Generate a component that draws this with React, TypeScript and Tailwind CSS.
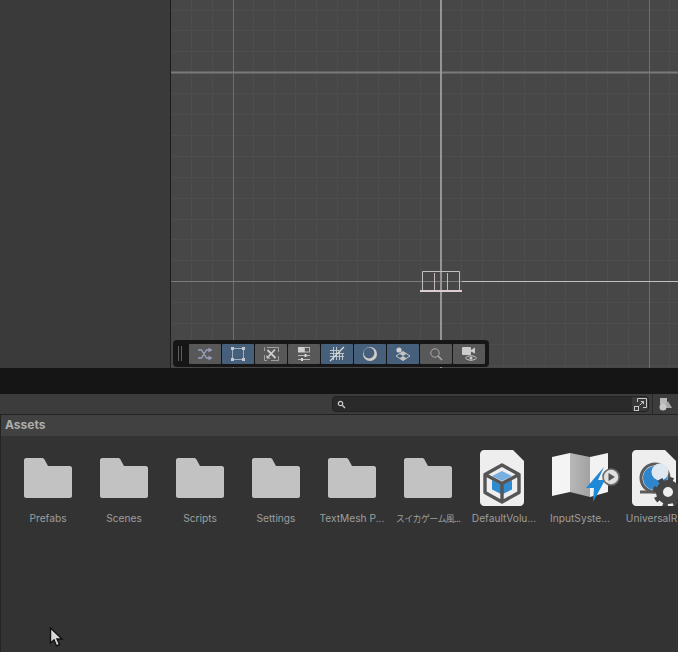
import type { ReactNode } from "react";

const minorX = Array.from({ length: 25 }, (_, i) => Math.floor(170.6 + i * 20.8) + 0.5);
const minorY = Array.from({ length: 18 }, (_, i) => Math.floor(10 + i * 20.9) + 0.5);

const assets = [
  { name: "Prefabs", kind: "folder", text: "text-[10.2px]" },
  { name: "Scenes", kind: "folder", text: "text-[10.2px]" },
  { name: "Scripts", kind: "folder", text: "text-[10.2px]" },
  { name: "Settings", kind: "folder", text: "text-[10.2px]" },
  { name: "TextMesh P...", kind: "folder", text: "text-[10.2px]" },
  { name: "スイカゲーム風...", kind: "folder", text: "text-[9px] tracking-[-0.6px]" },
  { name: "DefaultVolu...", kind: "volume", text: "text-[10.2px]" },
  { name: "InputSyste...", kind: "input", text: "text-[10.2px]" },
  { name: "UniversalR...", kind: "urp", text: "text-[10.2px]" },
];

function SceneGrid() {
  return (
    <svg className="absolute inset-0" width="507" height="368" viewBox="171 0 507 368">
      {minorX.map((x) => (
        <line key={x} x1={x} x2={x} y1="0" y2="368" stroke="#4d4d4d" />
      ))}
      {minorY.map((y) => (
        <line key={y} x1="171" x2="678" y1={y} y2={y} stroke="#4d4d4d" />
      ))}
      <line x1="233.5" x2="233.5" y1="0" y2="368" stroke="#6e6e6e" />
      <line x1="649.5" x2="649.5" y1="0" y2="368" stroke="#6e6e6e" />
      <line x1="171" x2="678" y1="72.5" y2="72.5" stroke="#7a7a7a" strokeWidth="2" />
      <line x1="171" x2="678" y1="281.5" y2="281.5" stroke="#7a7a7a" />
      <line x1="441" x2="441" y1="0" y2="368" stroke="#959595" strokeWidth="2" />
      <path d="M422.5 291V271.5H459.5V291" fill="none" stroke="#c0c0c0" />
      <path d="M434.5 273V290M447.5 273V290" stroke="#c8b4ba" />
      <rect x="420" y="290" width="42" height="2" fill="#dccdd1" />
      <line x1="462" x2="678" y1="281.5" y2="281.5" stroke="#c0c0c0" />
    </svg>
  );
}

function ToolButton({ active, children }: { active?: boolean; children: ReactNode }) {
  return (
    <div
      className={`flex h-5 w-8 items-center justify-center rounded-[1px] ${active ? "bg-[#46607c]" : "bg-[#585858]"}`}
    >
      {children}
    </div>
  );
}

function ToolIcon({ children }: { children: ReactNode }) {
  return (
    <svg width="18" height="16" viewBox="0 0 18 16" fill="none" stroke="#c8c8c8" strokeWidth="1">
      {children}
    </svg>
  );
}

function SceneToolbar() {
  return (
    <div className="absolute left-[2px] top-[340px] flex h-[27px] w-[316px] items-center gap-px rounded-[4px] bg-[#161616] pl-4">
      <div className="absolute left-[5px] top-[6px] flex h-[15px] gap-[2px]">
        <div className="w-px bg-[#5e5e5e]" />
        <div className="w-px bg-[#5e5e5e]" />
      </div>
      <ToolButton>
        <ToolIcon>
          <path d="M2 4H5.5L10.5 12H13M2 12H5.5L10.5 4H13" stroke="#969ebe" strokeWidth="1.4" />
          <path d="M12.5 1.5L16.5 4L12.5 6.5ZM12.5 9.5L16.5 12L12.5 14.5Z" fill="#969ebe" stroke="none" />
        </ToolIcon>
      </ToolButton>
      <ToolButton active>
        <ToolIcon>
          <rect x="3.5" y="2.5" width="11" height="11" stroke="#9fb0c2" />
          <rect x="2" y="1" width="3" height="3" fill="#c8c8c8" stroke="none" />
          <rect x="13" y="1" width="3" height="3" fill="#c8c8c8" stroke="none" />
          <rect x="2" y="12" width="3" height="3" fill="#c8c8c8" stroke="none" />
          <rect x="13" y="12" width="3" height="3" fill="#c8c8c8" stroke="none" />
        </ToolIcon>
      </ToolButton>
      <ToolButton>
        <ToolIcon>
          <path d="M5 1.5H16.5V6M16.5 10V14.5H9M5 14.5H2.5V9M2.5 5V1.5H3" stroke="#a0a0a0" />
          <path d="M5.5 4L13.5 12M13 3.5L6.5 10.5" stroke="#cccccc" strokeWidth="1.8" />
          <path d="M4.5 9L8.5 12.5H4.5Z" fill="#cccccc" stroke="none" />
        </ToolIcon>
      </ToolButton>
      <ToolButton>
        <ToolIcon>
          <rect x="3" y="1" width="6.5" height="5.5" fill="#d0d0d0" stroke="none" />
          <rect x="9.5" y="1.5" width="5" height="4.5" stroke="#b8b8b8" />
          <path d="M3 9.5H15M3 13.5H15" stroke="#b8b8b8" />
          <rect x="9.5" y="8" width="2" height="3" fill="#d8d8d8" stroke="none" />
          <rect x="6" y="12" width="2" height="3" fill="#d8d8d8" stroke="none" />
        </ToolIcon>
      </ToolButton>
      <ToolButton active>
        <ToolIcon>
          <path d="M5.5 1V14M8.5 1V14M11.5 5V14M14.5 7V14M2 4.5H11M2 7.5H16M2 10.5H16" stroke="#c0c4c8" />
          <path d="M2 15L16 1" stroke="#dcdcdc" strokeWidth="1.2" />
        </ToolIcon>
      </ToolButton>
      <ToolButton active>
        <ToolIcon>
          <circle cx="9" cy="8" r="7" fill="#d0ccc6" stroke="none" />
          <circle cx="8" cy="7" r="5.4" fill="#46607c" stroke="none" />
        </ToolIcon>
      </ToolButton>
      <ToolButton active>
        <ToolIcon>
          <circle cx="5" cy="4" r="2.6" fill="#d0d0d0" stroke="none" />
          <path d="M9 5.5L16 10L9 14.5L2 10Z" stroke="#c4c4c4" />
          <path d="M9 5.5L12.5 7.75L9 10L5.5 7.75ZM9 10L12.5 12.25L9 14.5L5.5 12.25Z" fill="#c4c4c4" stroke="none" />
        </ToolIcon>
      </ToolButton>
      <ToolButton>
        <ToolIcon>
          <circle cx="8" cy="7" r="4.2" stroke="#aaaaaa" />
          <path d="M11 10L15 14" stroke="#aaaaaa" strokeWidth="1.5" />
        </ToolIcon>
      </ToolButton>
      <ToolButton>
        <ToolIcon>
          <rect x="2" y="1" width="9" height="8" rx="1" fill="#cccccc" stroke="none" />
          <path d="M11 4L15 1.5V7.5L11 5.5Z" fill="#cccccc" stroke="none" />
          <path d="M5.5 12C8 9 14 9 16.5 12C14 15 8 15 5.5 12Z" fill="#585858" stroke="#cccccc" />
          <circle cx="11" cy="12" r="1.6" fill="#cccccc" stroke="none" />
        </ToolIcon>
      </ToolButton>
    </div>
  );
}

function SearchBar() {
  return (
    <div className="flex h-[21px] shrink-0 items-center justify-end border-b border-[#232323] bg-[#3c3c3c]">
      <div className="flex h-4 w-[317px] items-center overflow-hidden rounded-[4px] border border-[#212121] bg-[#2a2a2a]">
        <svg className="ml-[4px] shrink-0" width="9" height="9" viewBox="0 0 9 9" fill="none">
          <circle cx="3.5" cy="3.5" r="2.2" stroke="#c8c8c8" strokeWidth="1.2" />
          <path d="M5.3 5.3L8 8" stroke="#c8c8c8" strokeWidth="1.4" />
        </svg>
        <div className="flex-1" />
        <div className="flex h-full w-[16px] items-center justify-center bg-[#383838]">
          <svg width="13" height="13" viewBox="0 0 13 13" fill="none" stroke="#c8c8c8">
            <path d="M3.5 4V.5H12.5V9.5H9" />
            <rect x=".5" y="8.5" width="4" height="4" />
            <path d="M5.5 7.5L9.5 3.5M6.8 3.5H9.5V6.2" />
          </svg>
        </div>
      </div>
      <div className="ml-[3px] flex h-full w-[26px] items-center justify-center border-l border-[#2a2a2a]">
        <svg width="14" height="14" viewBox="0 0 14 14">
          <rect x="1" y="1" width="7" height="6.5" fill="#b8b8b8" />
          <path d="M9 4L13 11H5Z" fill="#a8a8a8" />
          <circle cx="4" cy="10" r="3.5" fill="#c8c8c8" />
        </svg>
      </div>
    </div>
  );
}

function FolderIcon() {
  return (
    <svg width="48" height="40" viewBox="0 0 48 40">
      <path
        d="M2 0H18C19 0 20 .5 20.5 1.5L24 8H46C47 8 48 9 48 10V38C48 39 47 40 46 40H2C1 40 0 39 0 38V2C0 1 1 0 2 0Z"
        fill="#c2c2c2"
      />
    </svg>
  );
}

function VolumeIcon() {
  return (
    <svg className="mr-1 shrink-0" width="44" height="56" viewBox="0 0 44 56">
      <path
        d="M4 0H33L44 11V52C44 54 42 56 40 56H4C2 56 0 54 0 52V4C0 2 2 0 4 0Z"
        fill="#eeeeee"
      />
      <path d="M22 21L32 26L22 31L12 26Z" fill="#78aee0" />
      <path d="M12 30L21 34.5V44L12 39.5Z" fill="#2f8ad0" />
      <path d="M32 30L23 34.5V44L32 39.5Z" fill="#2f8ad0" />
      <path
        d="M22 15L39 24.5V42.5L22 52L5 42.5V24.5ZM5 24.5L22 33.5L39 24.5M22 33.5V52"
        fill="none"
        stroke="#555555"
        strokeWidth="3.4"
        strokeLinejoin="round"
      />
    </svg>
  );
}

function InputIcon() {
  return (
    <svg className="ml-[11px] shrink-0" width="68" height="50" viewBox="0 0 68 50">
      <defs>
        <linearGradient id="fold" x1="0" x2="1" y1="0" y2="0">
          <stop offset="0" stopColor="#b8b8b8" />
          <stop offset="1" stopColor="#a2a2a2" />
        </linearGradient>
      </defs>
      <path d="M0 4L18 0V39L0 43Z" fill="#f4f4f4" />
      <path d="M18 0L38 4V44L18 39Z" fill="url(#fold)" />
      <path d="M38 4L56 0V39L38 44Z" fill="#f2f2f2" />
      <path d="M52 14L34 35H42L41 49L53 27H46L52 14Z" fill="#1e8ad6" />
      <circle cx="59" cy="24" r="8" fill="#e0e0e0" stroke="#6c6c6c" strokeWidth="1.6" />
      <path d="M56.5 20L63 24L56.5 28Z" fill="#555555" />
    </svg>
  );
}

function UrpIcon() {
  return (
    <svg className="mr-[2px] shrink-0" width="46" height="56" viewBox="0 0 46 56">
      <path
        d="M4 0H33L44 11V52C44 54 42 56 40 56H4C2 56 0 54 0 52V4C0 2 2 0 4 0Z"
        fill="#eeeeee"
      />
      <circle cx="23" cy="28" r="14" fill="#eeeeee" stroke="#5c5c5c" strokeWidth="3" />
      <circle cx="23" cy="28" r="12" fill="#2f86cc" />
      <circle cx="28" cy="22" r="8.5" fill="#dfe8f0" />
      <path d="M8 42H26" stroke="#5c5c5c" strokeWidth="3" />
      <circle cx="36" cy="42" r="8.5" fill="#eeeeee" stroke="#444444" strokeWidth="7" />
      <circle cx="36" cy="42" r="13" fill="none" stroke="#444444" strokeWidth="4" strokeDasharray="5 5.2" />
    </svg>
  );
}

function AssetItem({ name, kind, text }: { name: string; kind: string; text: string }) {
  return (
    <div className="flex w-[76px] shrink-0 flex-col items-center">
      <div className="flex h-[64px] w-[76px] items-center justify-center">
        {kind === "folder" && <FolderIcon />}
        {kind === "volume" && <VolumeIcon />}
        {kind === "input" && <InputIcon />}
        {kind === "urp" && <UrpIcon />}
      </div>
      <div className={`mt-[2px] whitespace-nowrap leading-[13px] text-[#9e9e9e] ${text}`}>{name}</div>
    </div>
  );
}

export default function App() {
  return (
    <div
      className="relative flex h-[652px] w-[678px] flex-col overflow-hidden bg-[#333333]"
      style={{ fontFamily: "Inter, 'Noto Sans CJK JP', sans-serif" }}
    >
      <div className="flex h-[368px] shrink-0">
        <div className="w-[171px] shrink-0 border-r border-[#1c1c1c] bg-[#3a3a3a]" />
        <div className="relative flex-1 overflow-hidden bg-[#474747]">
          <SceneGrid />
          <SceneToolbar />
        </div>
      </div>
      <div className="h-[26px] shrink-0 bg-[#151515]" />
      <SearchBar />
      <div className="flex flex-1 flex-col border-l border-[#232323]">
        <div className="flex h-[21px] shrink-0 items-center bg-[#414141] pb-[2px] pl-[4px] text-[12px] font-bold text-[#aeaeae]">
          Assets
        </div>
        <div className="flex flex-1 items-start overflow-hidden pl-[9px] pt-[10px]">
          {assets.map((a) => (
            <AssetItem key={a.name} name={a.name} kind={a.kind} text={a.text} />
          ))}
        </div>
      </div>
      <svg className="absolute left-[49px] top-[627px]" width="15" height="21" viewBox="0 0 15 21">
        <path d="M1.5 1V16L5 13L7.5 19L10.5 17.5L8 12H13Z" fill="#d8d8d8" stroke="#111111" strokeWidth="1.4" />
      </svg>
    </div>
  );
}
